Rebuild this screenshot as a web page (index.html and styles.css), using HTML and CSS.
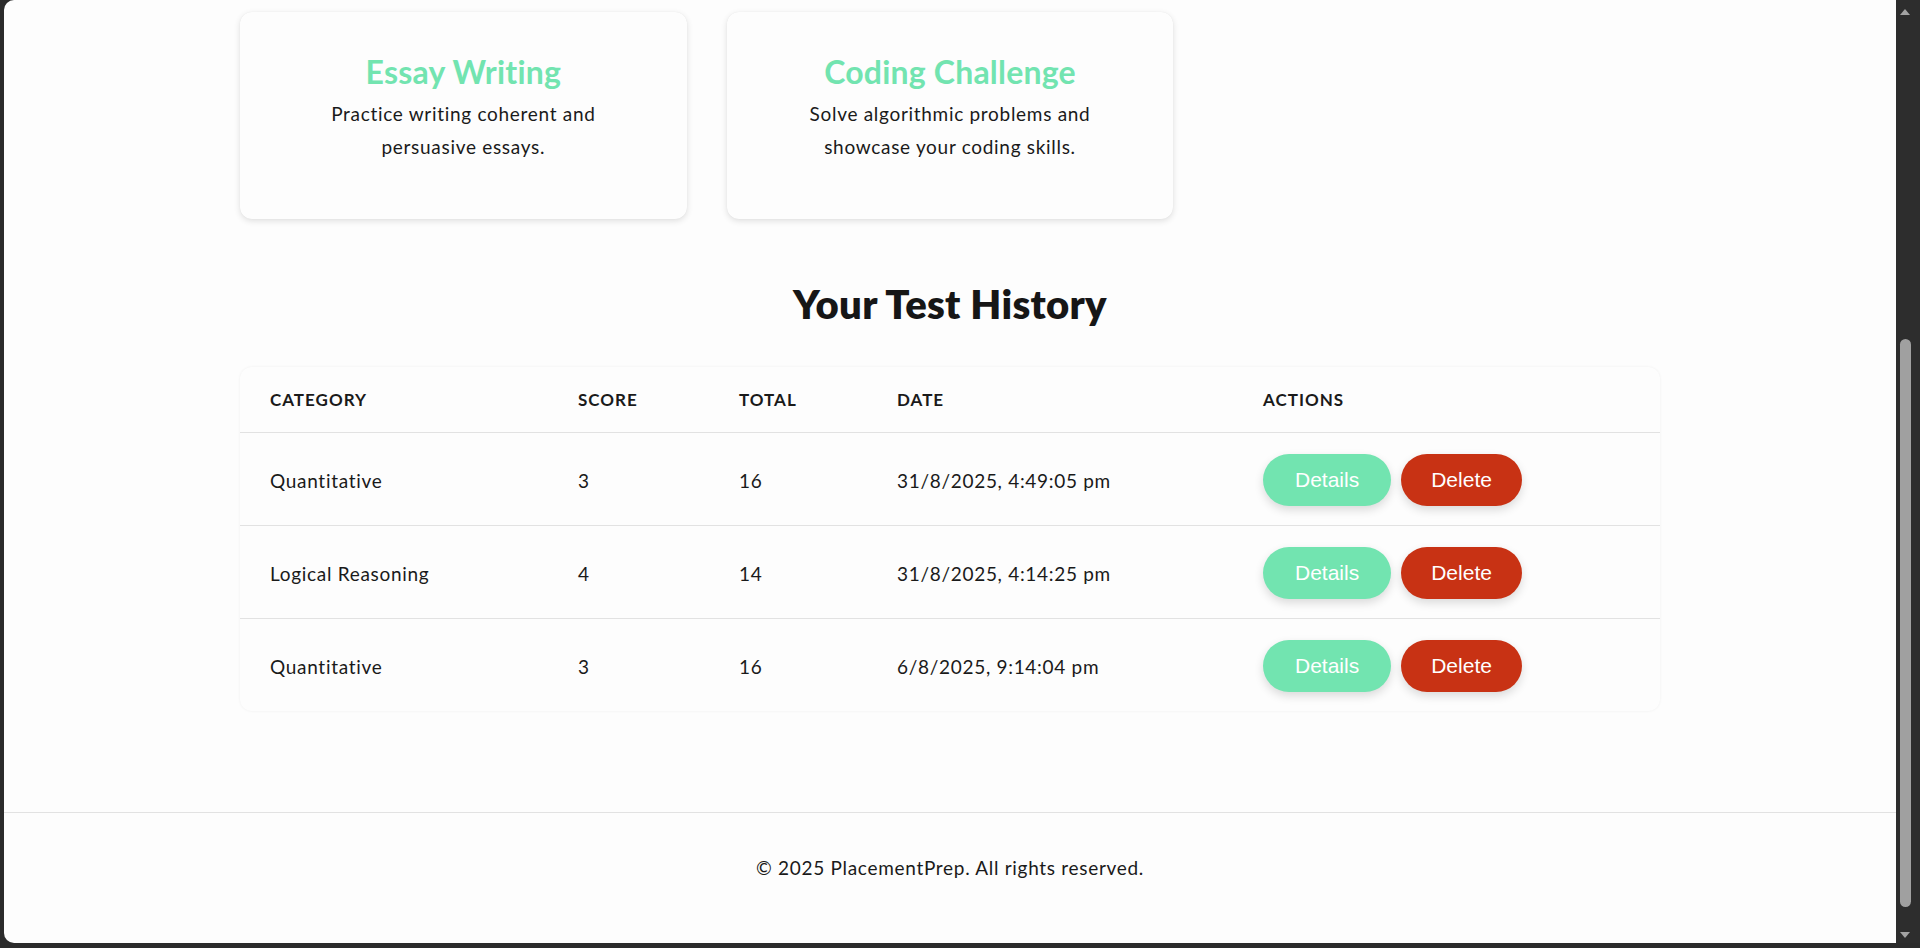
FILE: index.html
```html
<!DOCTYPE html>
<html lang="en">
<head>
<meta charset="utf-8">
<title>PlacementPrep</title>
<link rel="stylesheet" href="styles.css">
</head>
<body>
<div class="window">
  <div class="viewport">
    <main class="page">
      <section class="cards">
        <div class="card">
          <h3 class="card-title">Essay Writing</h3>
          <p class="card-text">Practice writing coherent and persuasive essays.</p>
        </div>
        <div class="card">
          <h3 class="card-title">Coding Challenge</h3>
          <p class="card-text">Solve algorithmic problems and showcase your coding skills.</p>
        </div>
      </section>

      <section class="history">
        <h2 class="history-title">Your Test History</h2>
        <div class="table-wrap">
          <table class="history-table">
            <colgroup>
              <col class="c-cat"><col class="c-score"><col class="c-total"><col class="c-date"><col class="c-actions">
            </colgroup>
            <thead>
              <tr><th>Category</th><th>Score</th><th>Total</th><th>Date</th><th>Actions</th></tr>
            </thead>
            <tbody>
              <tr>
                <td>Quantitative</td><td>3</td><td>16</td><td>31/8/2025, 4:49:05 pm</td>
                <td><div class="actions"><button class="btn btn-details">Details</button><button class="btn btn-delete">Delete</button></div></td>
              </tr>
              <tr>
                <td>Logical Reasoning</td><td>4</td><td>14</td><td>31/8/2025, 4:14:25 pm</td>
                <td><div class="actions"><button class="btn btn-details">Details</button><button class="btn btn-delete">Delete</button></div></td>
              </tr>
              <tr class="last">
                <td>Quantitative</td><td>3</td><td>16</td><td>6/8/2025, 9:14:04 pm</td>
                <td><div class="actions"><button class="btn btn-details">Details</button><button class="btn btn-delete">Delete</button></div></td>
              </tr>
            </tbody>
          </table>
        </div>
      </section>
    </main>
    <footer class="footer">
      <p>© 2025 PlacementPrep. All rights reserved.</p>
    </footer>
  </div>
  <div class="scrollbar">
    <div class="sb-arrow sb-up">
      <svg width="10" height="6" viewBox="0 0 10 6"><polygon points="0,6 5,0 10,6" fill="#a3a3a3"/></svg>
    </div>
    <div class="sb-track"><div class="sb-thumb"></div></div>
    <div class="sb-arrow sb-down">
      <svg width="10" height="6" viewBox="0 0 10 6"><polygon points="0,0 10,0 5,6" fill="#a3a3a3"/></svg>
    </div>
  </div>
</div>
</body>
</html>
```
FILE: styles.css
```css
* { box-sizing: border-box; }
html, body { margin: 0; padding: 0; }
body {
  width: 1920px;
  height: 948px;
  overflow: hidden;
  background: #2b2b2b;
  font-family: Lato, "Noto Sans", sans-serif;
  color: #1a1a1a;
}
.window {
  display: flex;
  height: 948px;
  padding: 0 0 5px 4px;
}
.viewport {
  flex: 1;
  background: #fdfdfd;
  border-radius: 10px 0 0 10px;
  overflow: hidden;
  display: flex;
  flex-direction: column;
}
.page {
  width: 1420px;
  margin: 0 auto;
  padding-top: 12px;
}
.cards {
  display: grid;
  grid-template-columns: repeat(3, 1fr);
  gap: 40px;
}
.card {
  background: #fdfdfd;
  border-radius: 12px;
  box-shadow: 0 2px 6px rgba(0,0,0,0.12), 0 0 1px rgba(0,0,0,0.08);
  padding: 40px 58px 56px;
  text-align: center;
  height: 207px;
}
.card-title {
  margin: 0 0 6px;
  font-size: 32px;
  line-height: 39px;
  font-weight: 700;
  color: #72e4b0;
  letter-spacing: 0.2px;
}
.card-text {
  margin: 0;
  font-size: 19px;
  line-height: 33px;
  letter-spacing: 0.7px;
}
.history {
  padding-top: 61px;
}
.history-title {
  margin: 0 0 39px;
  text-align: center;
  font-size: 40px;
  line-height: 48px;
  font-weight: 800;
  color: #161616;
  letter-spacing: 0.3px;
}
.table-wrap {
  border-radius: 12px;
  background: #fdfdfd;
  box-shadow: 0 0 3px rgba(0,0,0,0.06);
  overflow: hidden;
}
.history-table {
  width: 100%;
  border-collapse: collapse;
  table-layout: fixed;
}
.c-cat { width: 308px; }
.c-score { width: 161px; }
.c-total { width: 158px; }
.c-date { width: 366px; }
.c-actions { width: 427px; }
.history-table th {
  text-align: left;
  font-size: 17px;
  line-height: 25px;
  font-weight: 700;
  text-transform: uppercase;
  letter-spacing: 1px;
  padding: 20px 30px;
  border-bottom: 1px solid #e2e2e2;
}
.history-table td {
  font-size: 19px;
  line-height: 25px;
  letter-spacing: 0.7px;
  padding: 21px 30px 19px;
  border-bottom: 1px solid #e2e2e2;
  vertical-align: middle;
}
.history-table tr.last td { border-bottom: none; }
.actions {
  display: flex;
  gap: 10px;
}
.btn {
  font-family: "Liberation Sans", Arial, sans-serif;
  font-size: 21px;
  line-height: 24px;
  letter-spacing: 0;
  color: #ffffff;
  border: none;
  border-radius: 26px;
  padding: 14px 32px;
  height: 52px;
  box-shadow: 0 4px 10px rgba(0,0,0,0.14);
  cursor: pointer;
}
.btn-details { background: #72e4b0; }
.btn-delete { background: #c83214; padding: 14px 30px; }
.footer {
  margin-top: 101px;
  border-top: 1px solid #e2e2e2;
  padding-top: 40px;
  text-align: center;
  flex: 1;
}
.footer p {
  margin: 0;
  font-size: 19px;
  line-height: 30px;
  letter-spacing: 0.7px;
}
.scrollbar {
  width: 24px;
  background: #2d2d2d;
  display: flex;
  flex-direction: column;
  align-items: center;
}
.sb-arrow {
  height: 17px;
  display: flex;
  align-items: center;
  justify-content: center;
  width: 100%;
  padding-right: 6px;
}
.sb-up { padding-top: 6px; }
.sb-track {
  flex: 1;
  width: 100%;
  padding-left: 4px;
}
.sb-thumb {
  margin-top: 322px;
  width: 11px;
  height: 568px;
  background: #a0a0a0;
  border-radius: 6px;
}
```
